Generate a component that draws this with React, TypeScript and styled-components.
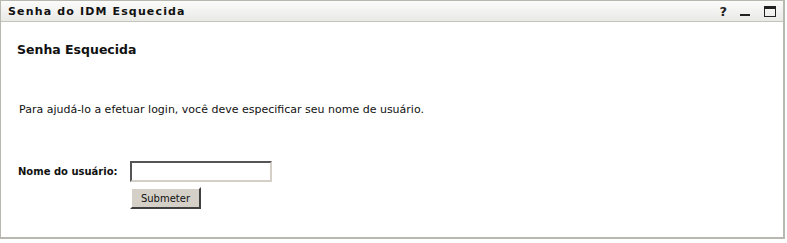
import React from "react"
import styled, { createGlobalStyle } from "styled-components"

const Global = createGlobalStyle`
  html, body {
    margin: 0;
    padding: 0;
    background: #fff;
  }
  body {
    font-family: "DejaVu Sans", Verdana, sans-serif;
    color: #000;
  }
`

const Portlet = styled.div`
  width: 785px;
  height: 239px;
  box-sizing: border-box;
  border: 1px solid #b8b8b0;
  border-right-width: 2px;
  border-bottom-width: 2px;
  display: flex;
  flex-direction: column;
`

const TitleBar = styled.div`
  height: 21px;
  box-sizing: border-box;
  display: flex;
  align-items: center;
  justify-content: space-between;
  padding: 0 7px 0 7px;
  background: linear-gradient(#fbfbfa, #e9e9e6);
  border-bottom: 1px solid #c4c4bd;
`

const TitleText = styled.span`
  font-family: "DejaVu Sans", Verdana, sans-serif;
  font-weight: bold;
  font-size: 11px;
  letter-spacing: 1.15px;
  color: #111;
`

const Controls = styled.div`
  display: flex;
  align-items: center;
  gap: 13px;
`

const Ctl = styled.span`
  font-family: "DejaVu Sans", Verdana, sans-serif;
  font-weight: bold;
  font-size: 13px;
  color: #222;
`

const Body = styled.div`
  flex: 1;
  padding: 20px 16px 0 16px;
`

const Heading = styled.h1`
  margin: 0;
  font-family: "DejaVu Sans", Verdana, sans-serif;
  font-size: 12.5px;
  font-weight: bold;
  color: #111;
`

const Intro = styled.p`
  margin: 46px 0 0 2px;
  font-family: "DejaVu Sans", Verdana, sans-serif;
  font-size: 11px;
  color: #111;
`

const Form = styled.div`
  margin-top: 45px;
  display: grid;
  grid-template-columns: 113px auto;
  row-gap: 5px;
  align-items: center;
`

const Label = styled.label`
  font-family: "DejaVu Sans", Verdana, sans-serif;
  font-weight: bold;
  font-size: 10px;
  color: #111;
  padding-left: 1px;
`

const Input = styled.input`
  width: 142px;
  height: 21px;
  box-sizing: border-box;
  border: 2px solid;
  border-color: #555 #d4d0c8 #d4d0c8 #555;
  background: #fff;
  padding: 0 2px;
  outline: none;
`

const Button = styled.button`
  grid-column: 2;
  justify-self: start;
  width: 71px;
  height: 22px;
  box-sizing: border-box;
  background: #d4d0c8;
  border: 2px solid;
  border-color: #fff #404040 #404040 #fff;
  font-family: "DejaVu Sans", Verdana, sans-serif;
  font-size: 10px;
  color: #111;
  padding: 0;
`

export default function App() {
  return (
    <>
      <Global />
      <Portlet>
        <TitleBar>
          <TitleText>Senha do IDM Esquecida</TitleText>
          <Controls>
            <Ctl>?</Ctl>
            <svg width="11" height="11" viewBox="0 0 11 11">
              <rect x="0" y="8" width="10" height="2" fill="#222" />
            </svg>
            <svg width="12" height="11" viewBox="0 0 12 11">
              <rect x="0.5" y="0.5" width="11" height="10" fill="none" stroke="#222" />
              <rect x="0" y="0" width="12" height="3" fill="#222" />
            </svg>
          </Controls>
        </TitleBar>
        <Body>
          <Heading>Senha Esquecida</Heading>
          <Intro>Para ajudá-lo a efetuar login, você deve especificar seu nome de usuário.</Intro>
          <Form>
            <Label htmlFor="user">Nome do usuário:</Label>
            <Input id="user" type="text" />
            <Button>Submeter</Button>
          </Form>
        </Body>
      </Portlet>
    </>
  )
}
